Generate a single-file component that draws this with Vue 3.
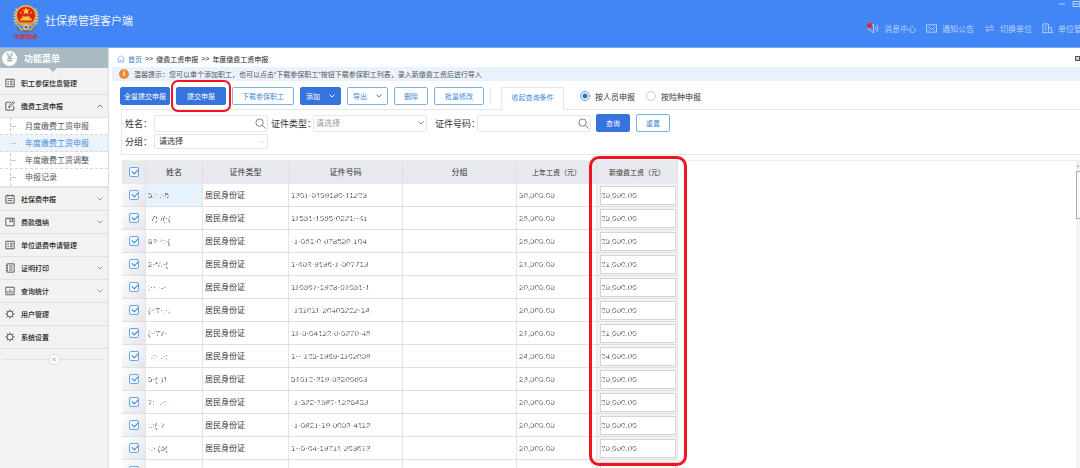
<script setup>
import { ref } from 'vue'

const nav = [
  { icon: 'speaker', label: '消息中心', badge: true },
  { icon: 'mail', label: '通知公告' },
  { icon: 'swap', label: '切换单位' },
  { icon: 'building', label: '单位管' }
]

const menu = [
  { icon: 'list', label: '职工参保信息管理' },
  {
    icon: 'edit', label: '缴费工资申报', open: true,
    children: ['月度缴费工资申报', '年度缴费工资申报', '年度缴费工资调整', '申报记录']
  },
  { icon: 'calendar', label: '社保费申报', arrow: true },
  { icon: 'book', label: '费款缴纳', arrow: true },
  { icon: 'list', label: '单位退费申请管理' },
  { icon: 'note', label: '证明打印', arrow: true },
  { icon: 'chart', label: '查询统计', arrow: true },
  { icon: 'gear', label: '用户管理' },
  { icon: 'gear', label: '系统设置' }
]
const current = '年度缴费工资申报'

const mode = ref('person')

const rows = ref([
  ['5.:·:·5', '1301·0199180·11223', '30,000.00', '30,000.00'],
  ['·7)·/(·(', '11551·1955·0221··41', '25,000.00', '25,000.00'],
  ['8?·*:·(', '·1·051·0·078520·104', '25,000.00', '25,000.00'],
  ['2·*/.·(', '1·403·9196·1·007713', '21,000.00', '21,000.00'],
  [':··-·-·', '110597·1978·01051·1', '20,000.00', '20,000.00'],
  ['(·:T·.·;', '·131011·20403222·14', '20,000.00', '20,000.00'],
  ['(·:77·', '11·0·04122·0·0270·45', '21,000.00', '21,000.00'],
  ['·.:··:·;', '1···125·1989·1102009', '24,000.00', '24,000.00'],
  ['5·(·)1', '51012·319·03200603', '23,000.00', '20,000.00'],
  ['7:.·.·:·', '·1·322·1987·1226433', '20,000.00', '20,000.00'],
  [':.:(·?', '·1·0821·19·0003·4112', '20,000.00', '20,000.00'],
  ['·:·.(5(', '1··0·04·19711·203673', '20,000.00', '20,000.00'],
  ['', '', '', '']
].map(([name, id, last, next]) => ({ checked: true, name, id, last, next })))
const allChecked = ref(true)
</script>

<template>
  <div class="app">
    <header class="top">
      <div class="brand">
        <svg class="emblem" viewBox="0 0 28 30" aria-hidden="true">
          <path d="M5 5C1 11 2 20 7 25M23 5c4 6 3 15-2 20" fill="none" stroke="#d8c083" stroke-width="3" stroke-dasharray="2 1" />
          <path d="M3 21c6 7 16 7 22 0l-2 6-9 3-9-3z" fill="#6b6f7c" />
          <circle cx="14" cy="12" r="11" fill="#e9b94b" />
          <circle cx="14" cy="12" r="9.5" fill="#e02415" />
          <path d="M14 3l1 3h3l-2.400 1.800 1 3-2.600-1.800-2.600 1.800 1-3L10 6h3z" fill="#ffd84a" />
          <path d="M8 17h12v-2h-2v-2h-8v2H8z" fill="#f7c843" />
          <circle cx="8.500" cy="9" r="0.800" fill="#ffd84a" /><circle cx="19.500" cy="9" r="0.800" fill="#ffd84a" />
          <path d="M6 19h16l-2 4H8z" fill="#d7a240" />
          <circle cx="14" cy="24" r="3" fill="#c7ccd0" /><circle cx="14" cy="24" r="1.500" fill="#8d5a33" />
          <path d="M7 25l4 2M21 25l-4 2" stroke="#e3c06b" stroke-width="1.500" />
        </svg>
        <span class="calligraphy">中国税务</span>
      </div>
      <h1>社保费管理客户端</h1>
      <nav class="links">
        <a v-for="n in nav" :key="n.label" href="#">
          <svg viewBox="0 0 12 12" aria-hidden="true">
            <g v-if="n.icon === 'speaker'"><path d="M1 4h2l3-3v10L3 8H1zM8 4q1.500 2 0 4M9.500 2q3 4 0 8" /></g>
            <g v-if="n.icon === 'mail'"><path d="M.5 2h11v8H.5zM2.500 4L6 7l3.500-3M2.500 8.500l1.500-1.500M9.500 8.500L8 7" /></g>
            <g v-if="n.icon === 'swap'"><path d="M1 4.500h9L7.500 2M11 7.500H2L4.500 10" /></g>
            <g v-if="n.icon === 'building'"><path d="M1 10.500V1h6v9.500M7 5h3.500v5.500M0 10.500h12M3 3.500h2M3 5.500h2M3 7.500h2M8.500 7.500h.5" /></g>
          </svg>
          <i v-if="n.badge" class="badge"></i>
          {{ n.label }}
        </a>
      </nav>
      <div class="window">
        <button aria-label="最小化"><svg viewBox="0 0 8 8"><path d="M1 4h6" /></svg></button>
        <button aria-label="还原"><svg viewBox="0 0 8 8"><path d="M1 1.500h7v5H1zM1 4h7" /></svg></button>
      </div>
    </header>

    <div class="body">
      <aside class="side">
        <div class="side-title"><span class="yen">¥</span>功能菜单</div>
        <ul class="menu">
          <li v-for="m in menu" :key="m.label">
            <a class="item" href="#">
              <svg class="glyph" viewBox="0 0 12 12" aria-hidden="true">
                <path v-if="m.icon === 'list'" d="M1 1.500h10v9H1zM3 4h1.500M3 6h1.500M3 8h1.500M6 4h3M6 6h3M6 8h3" />
                <path v-if="m.icon === 'edit'" d="M7 1.500H1v9.500h9.500V6M4.500 8l.5-2.500L10 .8l1.300 1.300L6.500 7z" />
                <path v-if="m.icon === 'calendar'" d="M1 2h10v9H1zM3.500.5V3M8.500.5V3M3 5.500h6M3 8h6" />
                <path v-if="m.icon === 'book'" d="M1 1.500h10v9H1zM6 1.500V6l1.500-1L9 6V1.500M3 1.500v1" />
                <path v-if="m.icon === 'note'" d="M2.500 1H11v10H2.500zM5 3.500h4M5 6h4M5 8.500h4M1 3h2M1 6h2M1 9h2" />
                <path v-if="m.icon === 'chart'" d="M1 1.500h10v9H1zM3.500 9V6M6 9V4M8.500 9V5.500" />
                <g v-if="m.icon === 'gear'"><circle cx="6" cy="6" r="3.500" /><path d="M6 .3v2M6 9.700v2M.3 6h2M9.700 6h2M2 2l1.500 1.500M8.500 8.500L10 10M10 2L8.500 3.500M3.500 8.500L2 10" /></g>
              </svg>
              <span>{{ m.label }}</span>
              <svg v-if="m.open" class="caret open" viewBox="0 0 6 6" aria-hidden="true"><path d="M.5 4.500L3 2l2.500 2.500" /></svg>
              <svg v-if="m.arrow" class="caret" viewBox="0 0 6 6" aria-hidden="true"><path d="M.5 1.500L3 4l2.500-2.500" /></svg>
            </a>
            <ul v-if="m.children" class="sub">
              <li v-for="c in m.children" :key="c"><a href="#" :class="{ on: c === current }">{{ c }}</a></li>
            </ul>
          </li>
        </ul>
        <div class="fold"><button aria-label="收起菜单">«</button></div>
      </aside>

      <main class="main">
        <div class="crumbs">
          <svg viewBox="0 0 10 10" aria-hidden="true"><path d="M.5 5L5 .8 9.500 5M1.800 4.500v4.700H4V6.500h2v2.700h2.200V4.500" /></svg>
          <a href="#">首页</a><span>&gt;&gt;</span><span>缴费工资申报</span><span>&gt;&gt;</span><span>年度缴费工资申报</span>
          <i class="dock"></i>
        </div>

        <p class="tip"><b>i</b>温馨提示：您可以单个添加职工，也可以点击“下载参保职工”按钮下载参保职工列表，录入新缴费工资后进行导入</p>

        <div class="tools">
          <button class="btn solid w50">全量提交申报</button>
          <div class="marked"><button class="btn solid w50">提交申报</button><i class="ring"></i></div>
          <button class="btn w62">下载参保职工</button>
          <button class="btn solid w41">添加<svg class="down" viewBox="0 0 6 6"><path d="M.5 1.500L3 4l2.500-2.500" /></svg></button>
          <button class="btn w41">导出<svg class="down" viewBox="0 0 6 6"><path d="M.5 1.500L3 4l2.500-2.500" /></svg></button>
          <button class="btn w34">删除</button>
          <button class="btn w50">批量修改</button>
          <i class="rule"></i>
          <button class="tab">收起查询条件</button>
          <div class="modes">
            <label><input v-model="mode" type="radio" name="mode" value="person">按人员申报</label>
            <label><input v-model="mode" type="radio" name="mode" value="type">按险种申报</label>
          </div>
        </div>

        <form class="filters" @submit.prevent>
          <div class="line first">
            <label for="f-name" class="short">姓名：</label>
            <div class="field"><input id="f-name" type="text"><svg class="search" viewBox="0 0 12 12"><circle cx="5" cy="5" r="4" /><path d="M8 8l3.500 3.500" /></svg></div>
            <label for="f-type" class="long">证件类型：</label>
            <div class="field"><select id="f-type" class="empty"><option>请选择</option></select><svg class="pick" viewBox="0 0 6 6"><path d="M.5 1.500L3 4l2.500-2.500" /></svg></div>
            <label for="f-id" class="long wide">证件号码：</label>
            <div class="field"><input id="f-id" type="text"><svg class="search" viewBox="0 0 12 12"><circle cx="5" cy="5" r="4" /><path d="M8 8l3.500 3.500" /></svg></div>
            <div class="actions">
              <button class="btn solid w34" type="submit">查询</button>
              <button class="btn w34" type="reset">重置</button>
            </div>
          </div>
          <div class="line">
            <label for="f-group" class="short">分组：</label>
            <div class="field low"><select id="f-group"><option>请选择</option></select><svg class="pick pale" viewBox="0 0 6 6"><path d="M.5 1.500L3 4l2.500-2.500" /></svg></div>
          </div>
        </form>

        <section class="grid">
          <div class="sheet">
            <table>
              <colgroup><col class="c-check"><col class="c-name"><col class="c-type"><col class="c-id"><col class="c-group"><col class="c-last"><col class="c-new"></colgroup>
              <thead>
                <tr>
                  <th class="check-all"><input v-model="allChecked" type="checkbox" aria-label="全选"></th>
                  <th>姓名</th><th>证件类型</th><th>证件号码</th><th>分组</th><th>上年工资（元）</th><th>新缴费工资（元）</th>
                </tr>
              </thead>
              <tbody>
                <tr v-for="(r, i) in rows" :key="i">
                  <td class="check"><input v-model="r.checked" type="checkbox" :aria-label="'选择第' + (i + 1) + '行'"></td>
                  <td :class="{ active: i === 0 }"><span class="worn">{{ r.name }}</span></td>
                  <td>{{ r.id ? '居民身份证' : '' }}</td>
                  <td><span class="worn">{{ r.id }}</span></td>
                  <td></td>
                  <td><span class="worn">{{ r.last }}</span></td>
                  <td class="entry"><div class="box"><input v-model="r.next" class="worn" type="text" :aria-label="'第' + (i + 1) + '行新缴费工资'"></div></td>
                </tr>
              </tbody>
            </table>
          </div>
          <i class="frame"></i>
          <div class="scroll"><svg viewBox="0 0 6 6"><path d="M1 4l2-2 2 2z" /></svg><i></i></div>
        </section>
      </main>
    </div>
  </div>
</template>

<style>
body { margin: 0; overflow: hidden; }
</style>

<style scoped>
* { box-sizing: border-box; }
.app {
  height: 100vh; display: flex; flex-direction: column; overflow: hidden;
  font-family: "Liberation Sans", "Noto Sans CJK SC", sans-serif; font-size: 7px; color: #333; background: #fff;
}
button, input, select { font: inherit; color: inherit; margin: 0; }
a { color: inherit; text-decoration: none; }
ul { list-style: none; margin: 0; padding: 0; }
svg { fill: none; stroke: currentColor; stroke-width: 1; flex: none; }

.top { position: relative; flex: none; height: 48px; display: flex; background: #4285f4; border-bottom: 1px solid #75a5f5; overflow: hidden; color: #fff; }
.brand { width: 45px; padding: 4px 0 0 6px; display: flex; flex-direction: column; align-items: center; flex: none; }
.emblem { width: 28px; height: 29px; stroke: none; }
.calligraphy { font-size: 6px; line-height: 8px; font-weight: bold; font-style: italic; color: #d3332f; white-space: nowrap; }
h1 { margin: 0; font-size: 11px; font-weight: normal; line-height: 43px; color: #eef4ff; }
.links { margin: 18px -2px 0 auto; display: flex; gap: 10px; height: 20px; align-items: center; }
.links a { position: relative; display: flex; gap: 5px; align-items: center; font-size: 8px; color: #b9d3fc; white-space: nowrap; }
.links svg { width: 11px; height: 11px; }
.badge { position: absolute; left: -1px; top: 0; width: 5px; height: 5px; border-radius: 50%; background: #e8202a; }
.window { position: absolute; top: 0; right: 0; display: flex; gap: 6px; color: #b9d3fc; }
.window button { border: 0; padding: 0; background: none; height: 8px; width: 8px; display: flex; }
.window svg { width: 8px; height: 8px; }

.body { flex: 1; min-height: 0; display: flex; }
.side { flex: none; width: 109px; background: #f2f2f2; border-right: 1px solid #dedede; }
.side-title { position: relative; height: 20px; margin-bottom: 4px; padding-left: 2px; display: flex; align-items: center; gap: 7px; background: #a9bac3; color: #fff; font-size: 9px; font-weight: bold; }
.side-title::after { content: ""; position: absolute; left: 49px; top: 20px; border: 4px solid transparent; border-bottom: 0; border-top-color: #a9bac3; }
.yen { width: 15px; height: 15px; border-radius: 50%; background: #fff; color: #a9bac3; font-size: 12px; line-height: 15px; text-align: center; }
.item { height: 23px; display: flex; align-items: center; gap: 6px; padding: 0 5px; border-bottom: 1px solid #e0e0e0; color: #222; font-weight: 500; }
.glyph { width: 10px; height: 10px; color: #444; }
.caret { width: 6px; height: 6px; margin-left: auto; color: #999; }
.caret.open { color: #4a86cc; }
.sub { position: relative; background: #fff; border-bottom: 2px solid #e4e4e4; font-size: 8px; color: #555; }
.sub::before { content: ""; position: absolute; left: 10px; top: 0; bottom: 0; border-left: 1px dashed #ccc; }
.sub a { position: relative; display: block; height: 17px; line-height: 17px; padding-left: 25px; border-bottom: 1px dashed #d8d8d8; white-space: nowrap; }
.sub a::before { content: ""; position: absolute; left: 11px; top: 8px; width: 5px; border-top: 1px dashed #ccc; }
.sub li:last-child a { border-bottom: 0; }
.sub a.on { background: #edf3fa; color: #4a8ed8; }
.fold { position: relative; margin: 5px 3px; display: flex; justify-content: center; }
.fold::before { content: ""; position: absolute; left: 0; right: 0; top: 5px; border-top: 1px solid #e2e2e2; }
.fold button { position: relative; width: 11px; height: 11px; padding: 0; border: 1px solid #ddd; border-radius: 50%; background: #fff; color: #8a9bab; font-size: 8px; line-height: 8px; }

.main { flex: 1; min-width: 0; display: flex; flex-direction: column; padding-left: 3px; }
.crumbs { flex: none; height: 19px; padding: 2px 0 0 5px; display: flex; align-items: center; gap: 3px; white-space: nowrap; color: #222; }
.crumbs svg { width: 8px; height: 8px; color: #7fb2e4; }
.crumbs a { color: #3f7fc4; }
.dock { width: 5px; height: 5px; margin-left: auto; border: 1px solid #555; background: #ccc; }
.tip { flex: none; height: 14px; margin: 0; padding-left: 7px; display: flex; align-items: center; background: #e9f2fd; color: #555; white-space: nowrap; }
.tip b { width: 10px; height: 10px; margin-right: 5px; border-radius: 50%; background: #ee8a35; color: #fff; font: italic bold 8px/10px "Liberation Serif", serif; text-align: center; }

.tools { flex: none; height: 28px; padding: 6px 0 0 8px; display: flex; align-items: flex-start; gap: 6px; }
.btn { display: flex; align-items: center; justify-content: center; height: 18px; padding: 0; border: 1px solid #7fb0e6; border-radius: 2px; background: #fff; color: #4288d8; white-space: nowrap; }
.btn.solid { background: #3573dd; border-color: #3573dd; color: #fff; }
.w34 { width: 34px; }
.w41 { width: 41px; }
.w50 { width: 50px; }
.w62 { width: 62px; }
.down { width: 6px; height: 6px; margin-left: 9px; }
.marked { position: relative; }
.ring { position: absolute; inset: -7px -5px -7px -5px; border: 2px solid #ee1420; border-radius: 7px; z-index: 2; }
.rule { width: 1px; height: 18px; background: #e4e4e4; }
.tab { position: relative; width: 63px; height: 23px; margin-left: 4px; padding: 0 0 5px; border: 1px solid #e6e6e6; border-bottom: 0; border-radius: 2px 2px 0 0; background: #fff; color: #4288d8; }
.modes { display: flex; gap: 11px; height: 18px; margin-left: 10px; font-size: 8px; }
.modes label { display: flex; align-items: center; gap: 5px; }
input[type="radio"] { appearance: none; width: 10px; height: 10px; border: 1px solid #ccc; border-radius: 50%; background: #fff; }
input[type="radio"]:checked { border-color: #5b9be8; background: radial-gradient(circle, #2f73d8 0 2px, #fff 3px); }

.filters { flex: none; margin-left: 9px; padding: 4px 0 5px 3px; border: 1px solid #e8e8e8; border-width: 1px 0 1px 1px; }
.line { display: flex; align-items: center; height: 15px; font-size: 9px; }
.line.first { height: 18px; margin-bottom: 2px; }
.short { width: 29px; white-space: nowrap; }
.long { width: 42px; margin-left: 3px; white-space: nowrap; }
.long.wide { margin-left: 8px; }
.field { position: relative; width: 114px; height: 17px; font-size: 8px; }
.field.low { height: 15px; }
.field input, .field select { appearance: none; display: block; width: 100%; height: 100%; padding: 0 4px; border: 1px solid #e6e6e6; border-radius: 2px; background: #fff; outline: 0; }
.field select.empty { padding: 0 2px; color: #999; }
.search { position: absolute; right: 2px; top: 3px; width: 11px; height: 11px; color: #777; }
.pick { position: absolute; right: 3px; top: 5px; width: 6px; height: 6px; color: #888; }
.pick.pale { color: #ddd; }
.actions { display: flex; gap: 6px; margin-left: 5px; font-size: 7px; }

.grid { position: relative; flex: 1; min-height: 0; margin: 5px 0 0 10px; border-top: 1px solid #eee; }
.sheet { height: 100%; overflow: hidden; }
table { width: 556px; table-layout: fixed; border-collapse: separate; border-spacing: 0; }
.c-check { width: 24px; }
.c-name { width: 57px; }
.c-type { width: 86px; }
.c-id { width: 114px; }
.c-group { width: 114px; }
.c-last { width: 80px; }
.c-new { width: 81px; }
th, td { height: 23px; padding: 2px 2px 0; border-right: 1px solid #e4e4e0; border-bottom: 1px solid #dfdfdf; white-space: nowrap; overflow: hidden; line-height: 12px; }
th { font-weight: normal; text-align: center; background: #e8e9ee; border-bottom-color: #e8e9ee; border-right-color: #dedfe4; font-size: 8px; }
th:nth-child(n+6) { font-size: 7px; }
td { font-size: 8px; }
th.check-all, td.check { padding: 0 2px; }
.check { text-align: center; background: linear-gradient(135deg, #fff, #e4e5ec); }
input[type="checkbox"] { appearance: none; display: block; margin: 0 auto; width: 10px; height: 10px; border: 1px solid #6ba6e4; border-radius: 2px; background: #f3f9ff; position: relative; }
input[type="checkbox"]:checked::after { content: ""; position: absolute; left: 2px; top: 1px; width: 5px; height: 3px; border: solid #3d86d8; border-width: 0 0 1px 1px; transform: rotate(-45deg); }
.active { background: #e6f2fe; }
.worn { color: #555; -webkit-mask-image: repeating-linear-gradient(150deg, #000 0 3px, rgba(0, 0, 0, .25) 4px 5px); mask-image: repeating-linear-gradient(150deg, #000 0 3px, rgba(0, 0, 0, .25) 4px 5px); }
td.entry { padding: 0 1px 0 3px; background: #f3f3f4; }
.box { height: 19px; border: 1px solid #d4d4d4; background: #fff; }
.box input { display: block; width: 100%; height: 17px; padding: 0; border: 0; background: none; outline: 0; }
.frame { position: absolute; left: 467px; top: -5px; width: 98px; bottom: 2px; border: 3px solid #ee1420; border-radius: 10px; }
.scroll { position: absolute; right: 0; top: 0; bottom: 0; width: 4px; background: #f3f3f3; }
.scroll svg { display: block; width: 4px; height: 10px; fill: #888; stroke: none; }
.scroll i { display: block; height: 48px; border: 1px solid #aaa; border-right: 0; background: #fafafa; }
</style>
